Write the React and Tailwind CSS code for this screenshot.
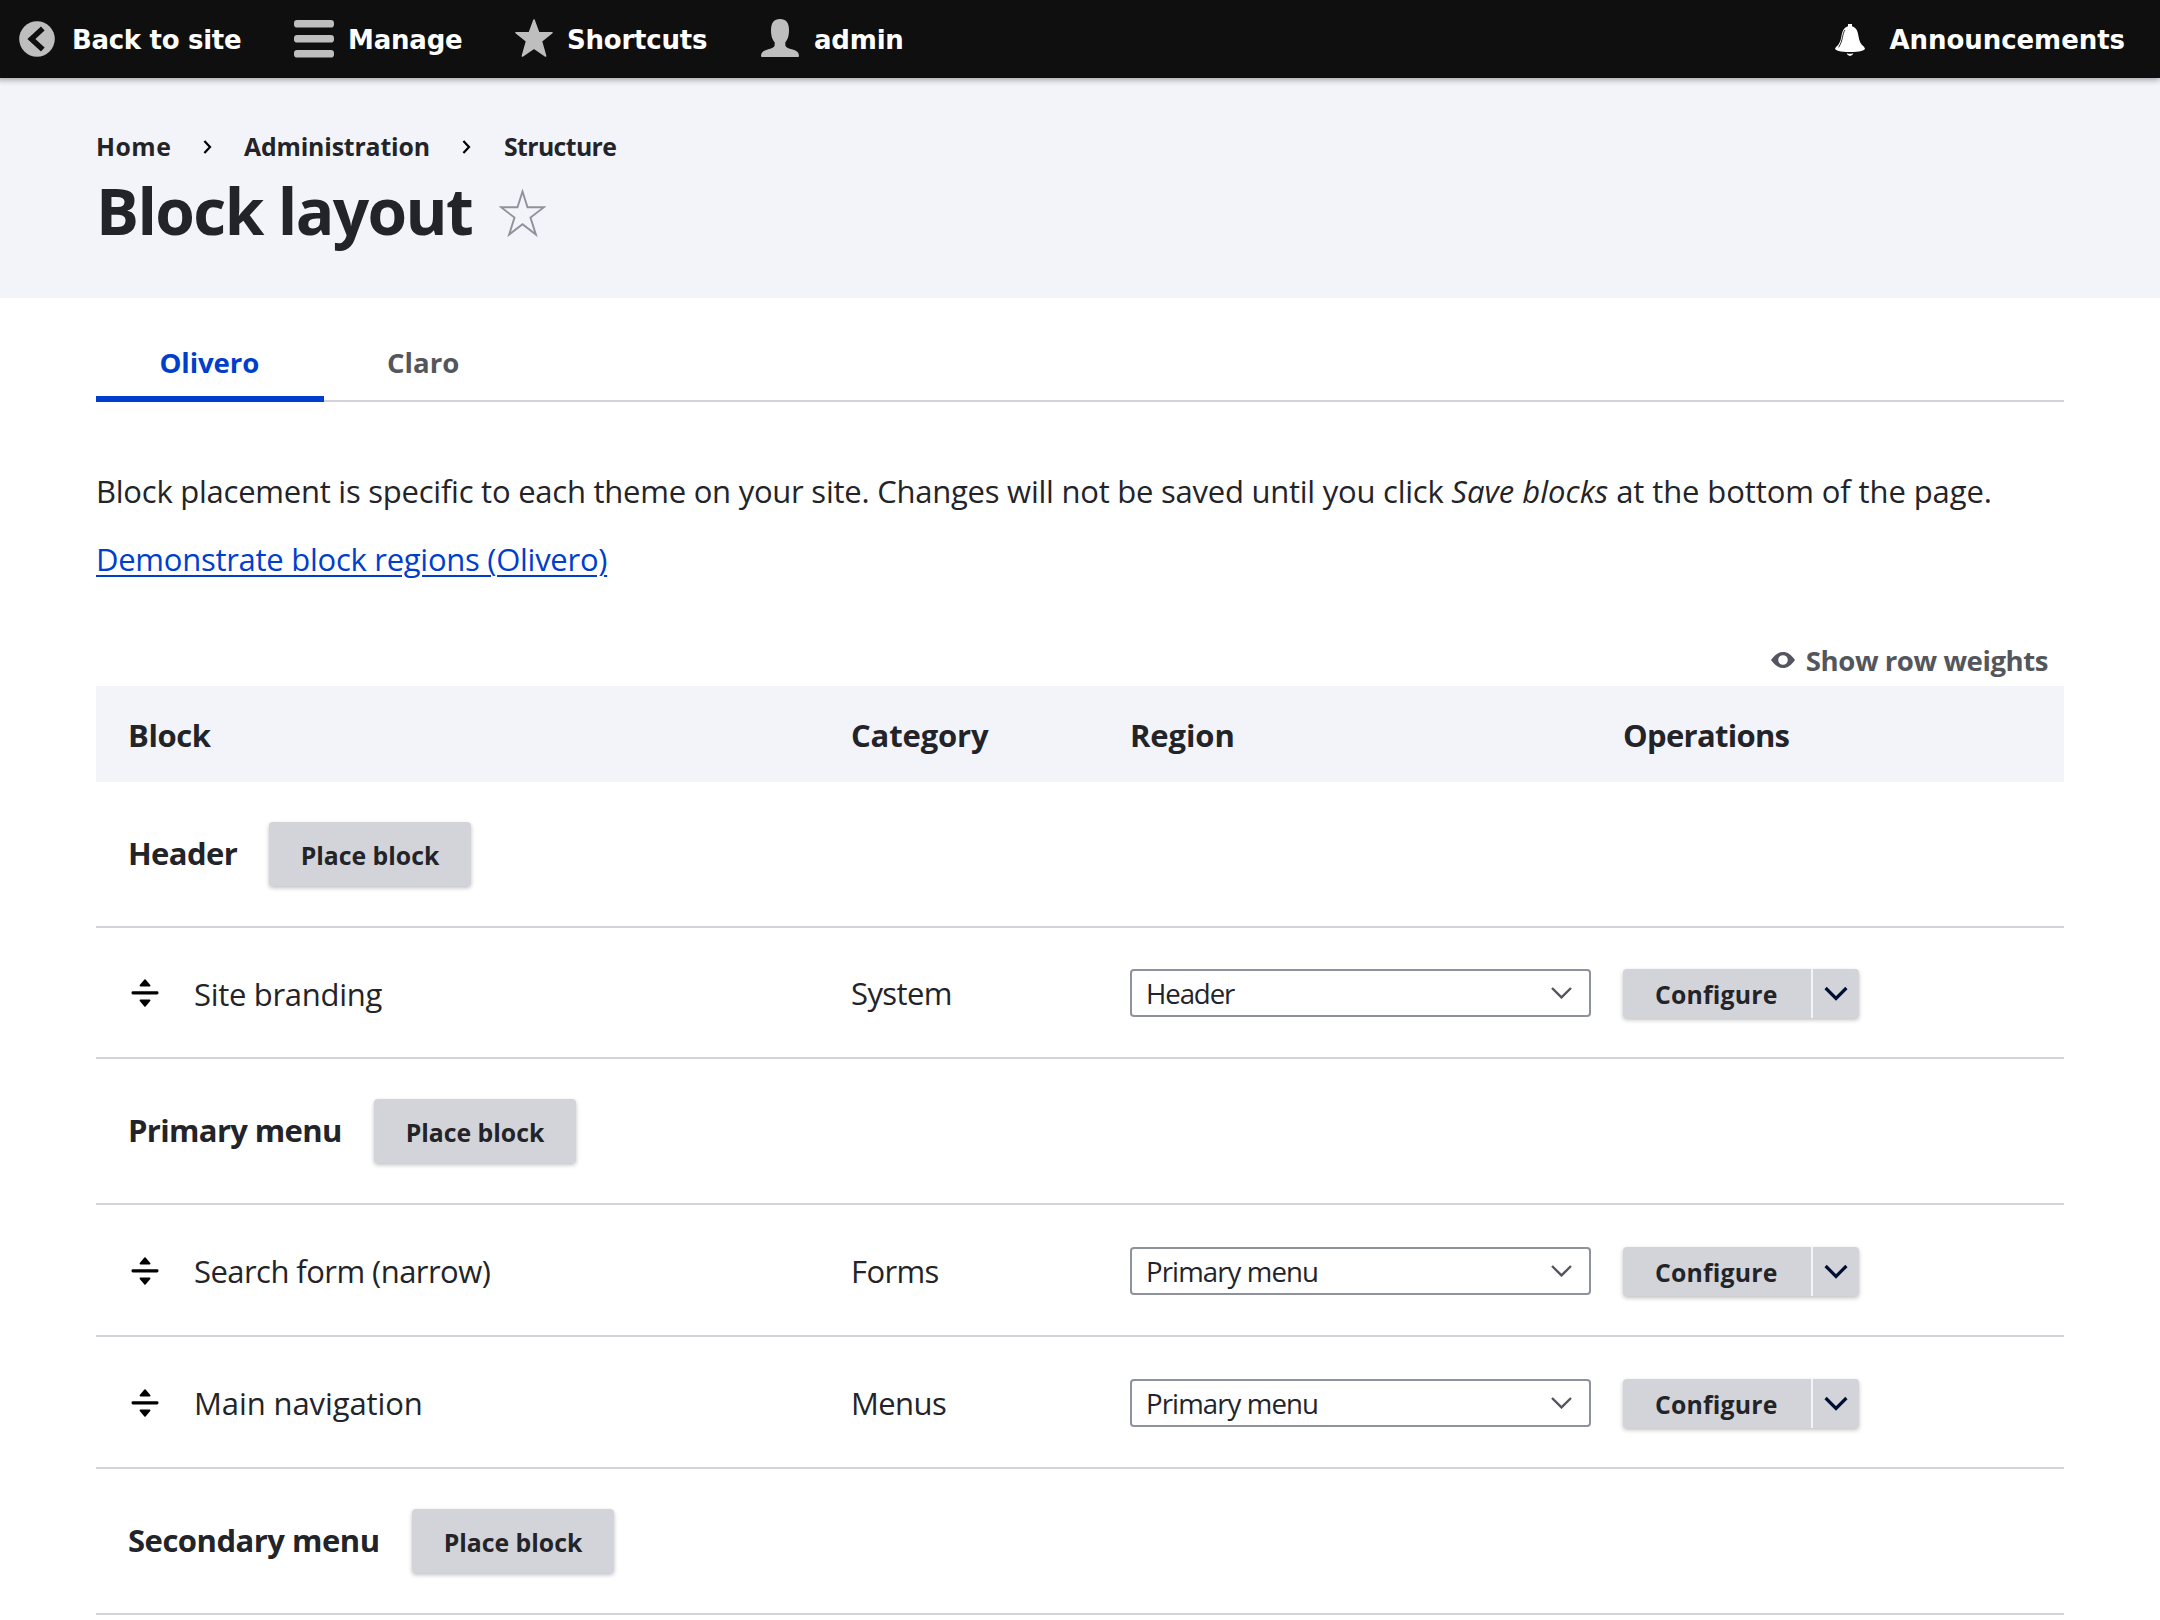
import React from "react";

function BackIcon() {
  return (
    <svg className="h-9 w-9 shrink-0" viewBox="0 0 36 36">
      <circle cx="18" cy="18" r="17.8" fill="#bebebe" />
      <path d="M23.8 7.6 L12.4 18 L23.8 28.4" fill="none" stroke="#0f0f0f" strokeWidth="5.4" />
    </svg>
  );
}

function MenuIcon() {
  return (
    <svg className="mt-[1px] h-10 w-10 shrink-0" viewBox="0 0 16 16" fill="#bebebe">
      <rect x="0" y="0" width="16" height="3" rx="1.25" />
      <rect x="0" y="6" width="16" height="3" rx="1.25" />
      <rect x="0" y="12" width="16" height="3" rx="1.25" />
    </svg>
  );
}

function StarIcon() {
  return (
    <svg className="mt-[-2px] h-[38px] w-[38px] shrink-0" viewBox="0 0 38 38">
      <path
        d="M19 1 L23.6 13.5 L37 13.7 L26.4 22.2 L30.6 37 L19 29.2 L7.4 37 L11.6 22.2 L1 13.7 L14.4 13.5 Z"
        fill="#bebebe"
        stroke="#bebebe"
        strokeWidth="1.6"
        strokeLinejoin="round"
      />
    </svg>
  );
}

function UserIcon() {
  return (
    <svg className="mt-[-2px] h-[38px] w-[38px] shrink-0" viewBox="183 57 114 114">
      <path
        fill="#bebebe"
        d="M183 168C183 157 190 152 205 148C217 145 224 141 224 135L224 127C217 119 213 108 213 90C213 68 222 57 240 57C258 57 267 68 267 90C267 108 263 119 256 127L256 135C256 141 263 145 275 148C290 152 297 157 297 168Q297 171 294 171L186 171Q183 171 183 168Z"
      />
    </svg>
  );
}

function BellIcon() {
  return (
    <svg className="mt-[2px] h-8 w-[30px] shrink-0" viewBox="225 72 90 96">
      <path
        fill="#fff"
        d="M264 72h12v7C287 82 293 92 295 106C297 122 302 134 312 140L315 146C315 150 300 156 270 156C240 156 225 150 225 146L228 141C238 134 243 120 245 104C248 90 254 82 264 79Z"
      />
      <path d="M255 90C246 102 250 120 236 142" fill="none" stroke="#0f0f0f" strokeWidth="2.6" />
      <path fill="#fff" d="M260 160Q270 163 280 160Q278 168 270 168Q262 168 260 160Z" />
    </svg>
  );
}

function Toolbar() {
  return (
    <header className="relative z-10 flex h-[78px] items-center bg-[#0f0f0f] font-['DejaVu_Sans','Liberation_Sans',sans-serif] text-[26px] leading-[76px] font-bold tracking-[-0.2px] text-white shadow-[-2px_0_6px_2px_rgba(0,0,0,0.333)]">
      <a className="flex w-[275px] items-center gap-[17px] pl-[19px]">
        <BackIcon />
        <span className="pt-[2px] tracking-[-0.3px]">Back to site</span>
      </a>
      <a className="flex w-[221px] items-center gap-[14px] pl-[19px]">
        <MenuIcon />
        <span className="pt-[2px]">Manage</span>
      </a>
      <a className="flex w-[246px] items-center gap-[14px] pl-[19px]">
        <StarIcon />
        <span className="pt-[2px]">Shortcuts</span>
      </a>
      <a className="flex items-center gap-[15px] pl-[19px]">
        <UserIcon />
        <span className="pt-[2px]">admin</span>
      </a>
      <a className="ml-auto flex items-center gap-[24px] pr-[35px]">
        <BellIcon />
        <span className="pt-[2px] tracking-[-0.05px]">Announcements</span>
      </a>
    </header>
  );
}

function CrumbArrow() {
  return (
    <svg className="mt-px h-[14px] w-[9px]" viewBox="0 0 9 14">
      <path d="M1.4 1 L7 7 L1.4 13" fill="none" stroke="#000" strokeWidth="2.2" />
    </svg>
  );
}

function PageHeader() {
  return (
    <div className="h-[220px] bg-[#f3f4f9] px-24 pt-[52px]">
      <nav className="flex h-8 items-center text-[24.8px] leading-8 font-bold">
        <span className="w-[107px] tracking-[0.5px]">Home</span>
        <CrumbArrow />
        <span className="ml-8 w-[218px] tracking-[-0.15px]">Administration</span>
        <CrumbArrow />
        <span className="ml-[33px] tracking-[-0.6px]">Structure</span>
      </nav>
      <h1 className="mt-[11px] flex items-center text-[64px] leading-[76px] font-bold tracking-[-1.6px]">
        <span className="w-[403px] whitespace-nowrap">Block layout</span>
        <svg className="mt-[3px] h-12 w-[47px]" viewBox="0 0 47 48">
          <path
            d="M23.500 2.500 L28.500 18.200 L45 18.200 L31.500 28.600 L36.900 45.600 L23.500 35.200 L10.100 45.600 L15.500 28.600 L2 18.200 L18.500 18.200 Z"
            fill="none"
            stroke="#8e929c"
            strokeWidth="1.9"
          />
        </svg>
      </h1>
    </div>
  );
}

function Tabs() {
  return (
    <div className="mt-[30px] flex h-[74px] border-b-2 border-[#d3d4d9] text-[27.6px] leading-[69px] font-bold">
      <a className="-mb-0.5 w-[228px] border-b-[6px] border-[#003ecc] pl-[63.500px] tracking-[-0.1px] text-[#003ecc]">
        Olivero
      </a>
      <a className="pl-[63px] text-[#55565b]">Claro</a>
    </div>
  );
}

function PlaceButton() {
  return (
    <button className="h-16 w-[202px] rounded bg-[#d3d4d9] pt-1 text-[24.8px] font-bold shadow-[0_2px_4px_rgba(0,0,0,0.25)]">
      Place block
    </button>
  );
}

function DragIcon() {
  return (
    <svg className="mr-[35px] ml-[3px] h-7 w-7" viewBox="0 0 28 28">
      <path
        d="M14 1 L18.6 6.6 H9.4 Z M14 27 L18.6 21.4 H9.4 Z"
        fill="#000"
        stroke="#000"
        strokeWidth="1.6"
        strokeLinejoin="round"
      />
      <rect x="0.5" y="12.2" width="27" height="3.2" rx="1.4" fill="#000" />
    </svg>
  );
}

const COLS = "grid grid-cols-[755px_279px_493px_1fr] items-center";

function RegionRow({ name, width, height }) {
  return (
    <div className={"flex items-center border-b-2 border-[#d3d4d9] pl-8 " + height}>
      <span className={"pb-[2px] text-[31px] font-bold whitespace-nowrap " + width}>{name}</span>
      <PlaceButton />
    </div>
  );
}

function BlockRow({ name, track, category, region, regionTrack, height }) {
  return (
    <div className={COLS + " border-b-2 border-[#d3d4d9] " + height}>
      <div className="flex items-center pl-8">
        <DragIcon />
        <span className={"text-[31px] leading-10 " + track}>{name}</span>
      </div>
      <span className="text-[31px] leading-10 tracking-[-0.6px]">{category}</span>
      <div className="flex h-12 w-[461px] items-center justify-between rounded border-2 border-[#8e929c] pr-[17px] pl-[14px]">
        <span className={"text-[27.6px] leading-10 " + regionTrack}>{region}</span>
        <svg className="h-3 w-[21px]" viewBox="0 0 21 12">
          <path d="M1 1 L10.5 10.4 L20 1" fill="none" stroke="#545560" strokeWidth="2.4" />
        </svg>
      </div>
      <div className="mt-0.5 flex h-[49px] w-[236px] rounded bg-[#d3d4d9] shadow-[0_2px_4px_rgba(0,0,0,0.25)]">
        <span className="w-[190px] border-r-2 border-[#f3f4f9] pt-[2px] pl-[32px] text-[24.8px] leading-[47px] font-bold tracking-[0.2px]">
          Configure
        </span>
        <svg className="mt-[17px] ml-[11px] h-4 w-6" viewBox="0 0 24 16">
          <path d="M1.6 2 L12 12.4 L22.4 2" fill="none" stroke="#000f33" strokeWidth="3.2" />
        </svg>
      </div>
    </div>
  );
}

export default function App() {
  return (
    <div className="h-[1620px] w-[2160px] overflow-hidden bg-white font-['Open_Sans','Noto_Sans',sans-serif] text-[#232429]">
      <Toolbar />
      <PageHeader />
      <main className="px-24">
        <Tabs />
        <p className="mt-[65px] text-[31px] leading-[48px] tracking-[-0.24px] whitespace-nowrap">
          Block placement is specific to each theme on your site. Changes will not be saved until you click{" "}
          <em className="tracking-[0.020px]">Save blocks</em>
          <span className="tracking-[-0.1px]"> at the bottom of the page.</span>
        </p>
        <p className="mt-5 text-[31px] leading-[48px] tracking-[-0.27px]">
          <a className="text-[#003ecc] underline decoration-2 underline-offset-[4px]">
            Demonstrate block regions (Olivero)
          </a>
        </p>
        <div className="mt-[55px] mb-[3px] flex h-[45px] items-center justify-end gap-[11px] pr-4 text-[27.6px] font-bold tracking-[-0.45px] text-[#55565b]">
          <svg className="mb-[2px] h-4 w-6" viewBox="0 0 24 16">
            <path
              fill="#545560"
              fillRule="evenodd"
              d="M0 8C4 2.5 7.500 0 12 0S20 2.500 24 8C20 13.500 16.500 16 12 16S4 13.500 0 8ZM12 3.200A4.800 4.800 0 1 0 12 12.800A4.800 4.800 0 1 0 12 3.200Z"
            />
          </svg>
          <span className="leading-[45px]">Show row weights</span>
        </div>
        <div>
          <div className={COLS + " h-24 bg-[#f3f4f9] pt-[2px] text-[31px] font-bold"}>
            <span className="pl-8 tracking-[-0.4px]">Block</span>
            <span className="tracking-[-0.15px]">Category</span>
            <span className="tracking-[-0.1px]">Region</span>
            <span className="tracking-[-0.7px]">Operations</span>
          </div>
          <RegionRow name="Header" width="w-[141px] tracking-[-0.6px]" height="h-[146px]" />
          <BlockRow
            name="Site branding"
            track="pt-[3px] tracking-[-0.3px]"
            category="System"
            region="Header"
            regionTrack="tracking-[-1.1px]"
            height="h-[131px]"
          />
          <RegionRow name="Primary menu" width="w-[246px] tracking-[-0.65px]" height="h-[146px]" />
          <BlockRow
            name="Search form (narrow)"
            track="pt-px tracking-[-0.55px]"
            category="Forms"
            region="Primary menu"
            regionTrack="tracking-[-0.9px]"
            height="h-[132px] pt-px"
          />
          <BlockRow
            name="Main navigation"
            track="pt-px tracking-[-0.1px]"
            category="Menus"
            region="Primary menu"
            regionTrack="tracking-[-0.9px]"
            height="h-[132px] pt-px"
          />
          <RegionRow name="Secondary menu" width="w-[284px] tracking-[-0.5px]" height="h-[146px]" />
        </div>
      </main>
    </div>
  );
}
